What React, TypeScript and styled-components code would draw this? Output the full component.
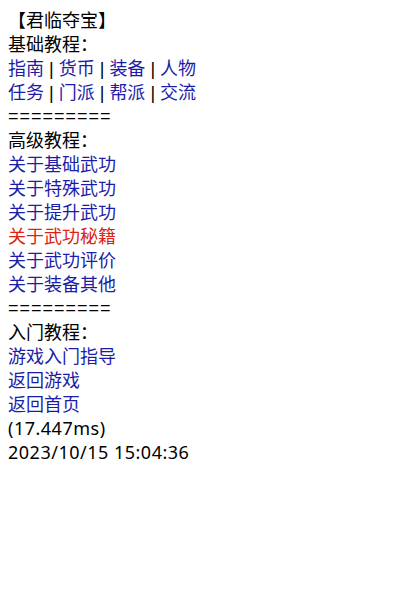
import React from "react"
import styled, { createGlobalStyle } from "styled-components"

const GlobalStyle = createGlobalStyle`
    body {
        margin: 8px;
        background: #ffffff;
        color: #000000;
        font-family: "Noto Sans", "Noto Sans CJK SC", sans-serif;
        font-size: 18px;
        line-height: 24px;
    }
`;

type Item = { text: string; hot?: boolean };

const basics = [
    ["指南", "货币", "装备", "人物"],
    ["任务", "门派", "帮派", "交流"],
];

const advanced: Item[] = [
    { text: "关于基础武功" },
    { text: "关于特殊武功" },
    { text: "关于提升武功" },
    { text: "关于武功秘籍", hot: true },
    { text: "关于武功评价" },
    { text: "关于装备其他" },
];

const footerLinks = ["游戏入门指导", "返回游戏", "返回首页"];

export default function App() {
    return (
        <Page>
            <GlobalStyle />
            <Line>【君临夺宝】</Line>
            <Line>基础教程：</Line>
            {basics.map((row, i) => (
                <Line key={i}>
                    {row.map((t, j) => (
                        <React.Fragment key={t}>
                            {j > 0 && <Pipe> | </Pipe>}
                            <Link href="#">{t}</Link>
                        </React.Fragment>
                    ))}
                </Line>
            ))}
            <Divider>=========</Divider>
            <Line>高级教程：</Line>
            {advanced.map(item => (
                <Line key={item.text}>
                    <Link href="#" $hot={item.hot}>{item.text}</Link>
                </Line>
            ))}
            <Divider>=========</Divider>
            <Line>入门教程：</Line>
            {footerLinks.map(t => (
                <Line key={t}>
                    <Link href="#">{t}</Link>
                </Line>
            ))}
            <Stamp>(17.447ms)</Stamp>
            <Stamp>2023/10/15 15:04:36</Stamp>
        </Page>
    )
}

const Page = styled.div`
    display: flex;
    flex-direction: column;
`;

const Line = styled.div`
    height: 24px;
    white-space: pre;
`;

const Divider = styled(Line)`
    font-family: "Liberation Sans", sans-serif;
    letter-spacing: 1px;
`;

const Stamp = styled(Line)`
    letter-spacing: 0.5px;
`;

const Pipe = styled.span`
    color: #000000;
    font-family: "Liberation Sans", sans-serif;
`;

const Link = styled.a<{ $hot?: boolean }>`
    color: ${p => (p.$hot ? "#dd2211" : "#1c1ca8")};
    text-decoration: none;
`;
